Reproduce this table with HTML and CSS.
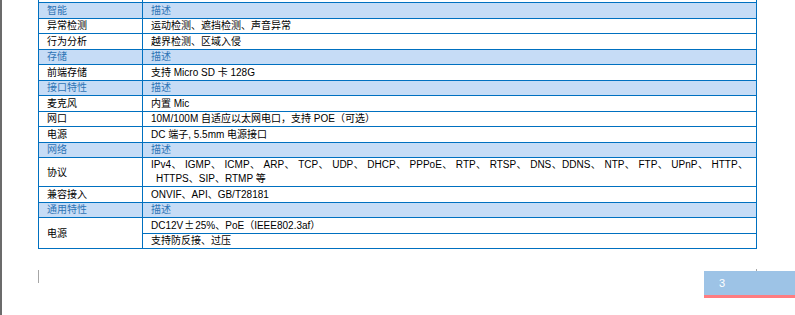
FILE: index.html
```html
<!DOCTYPE html>
<html lang="zh">
<head>
<meta charset="utf-8">
<title>规格</title>
<link rel="stylesheet" href="styles.css">
</head>
<body>
<div class="viewer">
  <div class="gutter"></div>
  <div class="page">
    <table class="spec">
      <colgroup><col class="c1"><col class="c2"></colgroup>
      <tr class="r"><td></td><td></td></tr>
      <tr class="hd"><td>智能</td><td>描述</td></tr>
      <tr class="r"><td>异常检测</td><td>运动检测、遮挡检测、声音异常</td></tr>
      <tr class="r"><td>行为分析</td><td>越界检测、区域入侵</td></tr>
      <tr class="hd"><td>存储</td><td>描述</td></tr>
      <tr class="r"><td>前端存储</td><td>支持 Micro SD 卡 128G</td></tr>
      <tr class="hd"><td>接口特性</td><td>描述</td></tr>
      <tr class="r"><td>麦克风</td><td>内置 Mic</td></tr>
      <tr class="r"><td>网口</td><td>10M/100M 自适应以太网电口，支持 POE（可选）</td></tr>
      <tr class="r"><td>电源</td><td>DC 端子, 5.5mm 电源接口</td></tr>
      <tr class="hd"><td>网络</td><td>描述</td></tr>
      <tr class="tall"><td>协议</td><td><div class="jl">IPv4、 IGMP、 ICMP、 ARP、 TCP、 UDP、 DHCP、 PPPoE、 RTP、 RTSP、 DNS、DDNS、 NTP、 FTP、 UPnP、 HTTP、</div><div class="l2">HTTPS、SIP、RTMP 等</div></td></tr>
      <tr class="r"><td>兼容接入</td><td>ONVIF、API、GB/T28181</td></tr>
      <tr class="hd"><td>通用特性</td><td>描述</td></tr>
      <tr class="r"><td rowspan="2">电源</td><td>DC12V<span class="cjk">±</span>25%、PoE（IEEE802.3af）</td></tr>
      <tr class="r"><td>支持防反接、过压</td></tr>
    </table>
    <div class="footer">
      <div class="mark"></div>
      <div class="tick"></div>
      <div class="pageno">3</div>
    </div>
  </div>
</div>
</body>
</html>
```

FILE: styles.css
```css
html, body {
  margin: 0;
  padding: 0;
  background: #ffffff;
  overflow: hidden;
}
.viewer {
  display: flex;
  height: 315px;
}
.gutter {
  width: 2px;
  background: #6b6b6b;
  flex: none;
}
.page {
  flex: 1;
  padding-left: 36px;
  display: flex;
  flex-direction: column;
}
.spec {
  border-collapse: collapse;
  width: 719px;
  margin-top: -13.5px;
  font-family: "Liberation Sans", "Noto Sans CJK SC", sans-serif;
  font-size: 10px;
  color: #000000;
}
.c1 { width: 104px; }
.spec td {
  border: 1px solid #0070c0;
  padding: 0 8px;
  line-height: 13px;
  height: 14.5px;
  vertical-align: middle;
  white-space: nowrap;
}
.spec tr.hd td {
  background: #c6dcf6;
  color: #2e74b5;
}
.spec tr.tall td {
  height: 27px;
}
.cjk {
  font-family: "Noto Sans CJK SC", sans-serif;
  padding: 0 1px;
}
.jl {
  text-align: justify;
  text-align-last: justify;
  line-height: 14px;
  white-space: normal;
}
.l2 {
  padding-left: 5px;
  line-height: 14px;
}
.footer {
  position: relative;
  margin-top: 21px;
  display: flex;
  justify-content: space-between;
  align-items: flex-start;
}
.mark {
  width: 1px;
  height: 13px;
  background: #a6a6a6;
}
.tick {
  position: absolute;
  left: 718px;
  top: -1px;
  width: 1px;
  height: 2px;
  background: #a6a6a6;
}
.pageno {
  width: 76px;
  height: 24px;
  margin-top: 1px;
  padding-left: 15px;
  background: #9dc3e6;
  border-bottom: 3px solid #ff7c80;
  color: #ffffff;
  font-family: "Liberation Sans", sans-serif;
  font-size: 11px;
  line-height: 24px;
}
```
